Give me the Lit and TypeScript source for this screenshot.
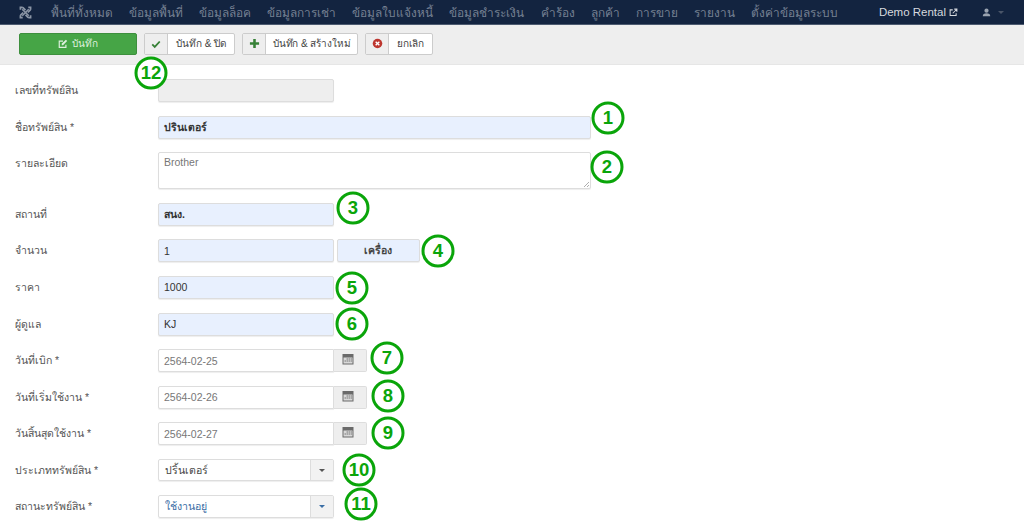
import { LitElement, html, css, svg } from "lit";
import { customElement } from "lit/decorators.js";

const menu = ["พื้นที่ทั้งหมด","ข้อมูลพื้นที่","ข้อมูลล็อค","ข้อมูลการเช่า","ข้อมูลใบแจ้งหนี้","ข้อมูลชำระเงิน","คำร้อง","ลูกค้า","การขาย","รายงาน","ตั้งค่าข้อมูลระบบ"];
const marks: [string, number, number][] = [["12",151,73],["1",608,118],["2",607,167],["3",353,208],["4",438,251],["5",352,288],["6",352,324],["7",387,358],["8",388,396],["9",388,433],["10",359,470],["11",361,504]];

const editIcon = svg`<svg class="ic" viewBox="0 0 12 12" width="10" height="10"><path d="M9.500 7v3H1.500V2.500H6" fill="none" stroke="currentColor" stroke-width="1.400"/><path d="M4.500 5.500 9.500 1 11 2.500 6 7.500H4.500z" fill="currentColor"/></svg>`;
const calIcon = html`<svg viewBox="0 0 12 12" width="12" height="12"><path d="M.5 1h11v10.500H.5z" fill="#6a6a6a"/><path d="M1.500 4.500h9v6h-9z" fill="#d8d8d8"/><path d="M4.500 5.500h1.500v1H4.500zM6.500 5.500h1.500v1H6.500zM8.500 5.500H10v1H8.500zM2.500 7.500H4v1H2.500zM4.500 7.500h1.500v1H4.500zM6.500 7.500h1.500v1H6.500zM8.500 7.500H10v1H8.500z" fill="#777"/></svg>`;

@customElement("app-root")
export class AppRoot extends LitElement {
  static styles = css`
    :host { display: block; width: 1024px; height: 523px; overflow: hidden; position: relative; background: #fff; font-family: "Liberation Sans", sans-serif; font-size: 11px; color: #555; }
    .nav { height: 24px; background: #132440; border-bottom: 1px solid #4c5a70; display: flex; align-items: center; padding: 0 3px 0 19px; color: #768193; }
    .logo { width: 13px; height: 13px; margin-right: 19px; }
    .menu { display: flex; gap: 16.100px; font-size: 11.850px; flex: 1; white-space: nowrap; }
    .brand { color: #d6d9de; font-size: 11.500px; display: flex; align-items: center; gap: 3px; margin-left: 1px; }
    .user { display: flex; align-items: center; gap: 7px; margin: 0 17px 0 24px; color: #9aa3b0; }
    .caret { width: 0; height: 0; border: 3px solid transparent; border-top-color: #4a5568; border-bottom: 0; }
    .bar { height: 40px; background: #eee; border-bottom: 1px solid #e6e6e6; display: flex; align-items: center; padding: 0 0 2px 19px; box-sizing: border-box; gap: 7px; }
    .save { width: 118px; height: 22px; box-sizing: border-box; background: #46a546; border: 1px solid #3d8f3d; border-radius: 2px; color: #dff0df; display: flex; align-items: center; justify-content: center; gap: 4px; font-size: 10px; }
    .btn { height: 22px; box-sizing: border-box; background: #fff; border: 1px solid #ccc; border-radius: 2px; display: flex; align-items: stretch; font-size: 10px; color: #444; }
    .btn i { width: 23px; background: #eee; border-right: 1px solid #ccc; box-sizing: border-box; display: flex; align-items: center; justify-content: center; }
    .btn span { padding: 0 8px; display: flex; align-items: center; }
    .btn .tight { padding: 0 6.500px; letter-spacing: -0.1px; }
    .form { padding: 14px 0 0 15px; }
    .row { display: flex; align-items: flex-start; margin-bottom: 13.600px; }
    .row label { width: 143px; flex: none; line-height: 22px; font-size: 10.500px; color: #555; }
    .field { height: 23px; box-sizing: border-box; border: 1px solid #ddd; border-radius: 2px; padding: 0 5px; display: flex; align-items: center; font-size: 10.500px; background: #fff; color: #666; box-shadow: 0 1px 1px #eee; }
    .wide { width: 433px; }
    .mid { width: 175.500px; }
    .filled { background: #e8f0fe; color: #333; }
    .bold { font-weight: 700; }
    .off { background: #eee; }
    .area { height: 37px; align-items: flex-start; padding-top: 3px; position: relative; color: #777; }
    .grip { position: absolute; right: 0; bottom: 0; width: 8px; height: 8px; }
    .unit { width: 83px; margin-left: 3px; justify-content: center; font-weight: 700; background: #e8f0fe; color: #444; }
    .date { display: flex; }
    .date .field { width: 175.500px; border-radius: 2px 0 0 2px; color: #777; }
    .date b { width: 33.500px; height: 23px; box-sizing: border-box; background: #eee; border: 1px solid #ddd; border-left: 0; border-radius: 0 2px 2px 0; display: flex; align-items: center; justify-content: center; padding-bottom: 3px; padding-right: 4px; }
    .sel { width: 175.500px; height: 22.500px; box-sizing: border-box; border: 1px solid #ddd; border-radius: 2px; display: flex; font-size: 10.600px; color: #444; box-shadow: 0 1px 1px #eee; }
    .sel span { flex: 1; padding-left: 6px; display: flex; align-items: center; }
    .sel b { width: 22px; background: #f2f2f2; border-left: 1px solid #ddd; display: flex; align-items: center; justify-content: center; }
    .sel .caret { border-top-color: #555; }
    .blue { color: #3a6ea5; }
    .blue .caret { border-top-color: #3a6ea5; }
    .mark { position: absolute; width: 33px; height: 33px; box-sizing: border-box; border: 3px solid #0aa50a; border-radius: 50%; color: #0aa50a; background: #fff; font-size: 18.500px; font-weight: 700; display: flex; align-items: center; justify-content: center; transform: translate(-50%, -50%); line-height: 1; }
  `;

  private row(label: string, body: unknown) {
    return html`<div class="row"><label>${label}</label>${body}</div>`;
  }
  private date(v: string) {
    return html`<div class="date"><div class="field">${v}</div><b>${calIcon}</b></div>`;
  }

  render() {
    return html`
      <div class="nav">
        <svg class="logo" viewBox="0 0 14 14"><g fill="none" stroke="#8b95a5" stroke-width="1.800"><path d="M3.500 3.500 10.500 10.500M10.500 3.500 3.500 10.500"/><path d="M1.500 4V1.500H4M4 1.500 7 4.500M10 1.500h2.500V4M12.500 4 9.500 7M12.500 10v2.500H10M10 12.500 7 9.500M4 12.500H1.500V10M1.500 10 4.500 7"/></g></svg>
        <div class="menu">${menu.map((m) => html`<span>${m}</span>`)}</div>
        <div class="brand">Demo Rental ${html`<svg viewBox="0 0 12 12" width="9" height="9"><path d="M9.500 7v3H1.500V2.500H5" fill="none" stroke="#d6d9de" stroke-width="1.400"/><path d="M5 7 10 2M7 1.500h3.500V5" fill="none" stroke="#d6d9de" stroke-width="1.400"/></svg>`}</div>
        <div class="user"><svg viewBox="0 0 12 12" width="9" height="9"><circle cx="6" cy="3.500" r="2.800" fill="#9aa3b0"/><path d="M1 11c0-3 2-4 5-4s5 1 5 4z" fill="#9aa3b0"/></svg><span class="caret"></span></div>
      </div>
      <div class="bar">
        <div class="save">${editIcon}<span>บันทึก</span></div>
        <div class="btn"><i><svg viewBox="0 0 12 12" width="10" height="10"><path d="M1.500 6.500 4.500 9.500 10.500 3" fill="none" stroke="#378137" stroke-width="2.200"/></svg></i><span>บันทึก &amp; ปิด</span></div>
        <div class="btn"><i><svg viewBox="0 0 12 12" width="11" height="11"><path d="M6 1v10M1 6h10" stroke="#378137" stroke-width="2.800"/></svg></i><span class="tight">บันทึก &amp; สร้างใหม่</span></div>
        <div class="btn"><i><svg viewBox="0 0 12 12" width="11" height="11"><circle cx="6" cy="6" r="5.200" fill="#bd362f"/><path d="M4 4 8 8M8 4 4 8" stroke="#fff" stroke-width="1.500"/></svg></i><span>ยกเลิก</span></div>
      </div>
      <div class="form">
        ${this.row("เลขที่ทรัพย์สิน", html`<div class="field mid off"></div>`)}
        ${this.row("ชื่อทรัพย์สิน *", html`<div class="field wide filled bold">ปรินเตอร์</div>`)}
        ${this.row("รายละเอียด", html`<div class="field wide area">Brother<svg class="grip" viewBox="0 0 8 8"><path d="M7 2 2 7M7 5 5 7" stroke="#999" stroke-width="0.800"/></svg></div>`)}
        ${this.row("สถานที่", html`<div class="field mid filled bold">สนง.</div>`)}
        ${this.row("จำนวน", html`<div class="field mid filled">1</div><div class="field unit">เครื่อง</div>`)}
        ${this.row("ราคา", html`<div class="field mid filled">1000</div>`)}
        ${this.row("ผู้ดูแล", html`<div class="field mid filled">KJ</div>`)}
        ${this.row("วันที่เบิก *", this.date("2564-02-25"))}
        ${this.row("วันที่เริ่มใช้งาน *", this.date("2564-02-26"))}
        ${this.row("วันสิ้นสุดใช้งาน *", this.date("2564-02-27"))}
        ${this.row("ประเภททรัพย์สิน *", html`<div class="sel"><span>ปริ้นเตอร์</span><b><i class="caret"></i></b></div>`)}
        ${this.row("สถานะทรัพย์สิน *", html`<div class="sel blue"><span>ใช้งานอยู่</span><b><i class="caret"></i></b></div>`)}
      </div>
      ${marks.map(([t, x, y]) => html`<div class="mark" style="left:${x}px;top:${y}px">${t}</div>`)}
    `;
  }
}
